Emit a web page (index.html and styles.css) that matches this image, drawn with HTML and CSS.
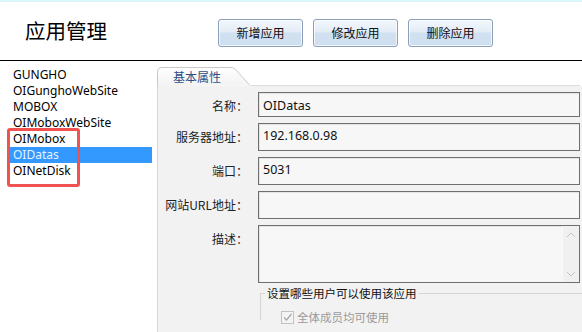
FILE: index.html
```html
<!DOCTYPE html>
<html lang="zh-CN">

<head>
    <meta charset="UTF-8">
    <meta name="viewport" content="width=device-width, initial-scale=1.0">
    <link rel="stylesheet" href="styles.css">
</head>

<body>
    <div class="topline"></div>
    <div class="header">
        <div class="title">应用管理</div>
        <div class="actions">
            <button class="btn">新增应用</button>
            <button class="btn">修改应用</button>
            <button class="btn">删除应用</button>
        </div>
    </div>
    <div class="rule"></div>

    <div class="main">
        <div class="apps">
            <div class="app">GUNGHO</div>
            <div class="app">OIGunghoWebSite</div>
            <div class="app">MOBOX</div>
            <div class="app">OIMoboxWebSite</div>
            <div class="app">OIMobox</div>
            <div class="app selected">OIDatas</div>
            <div class="app">OINetDisk</div>
            <div class="mark"></div>
        </div>

        <div class="props">
            <div class="tabs">
                <div class="tab">
                    <svg class="tab-bg" width="94" height="19" viewBox="0 0 94 19">
                        <defs>
                            <linearGradient id="tabfill" x1="0" y1="0" x2="0" y2="1">
                                <stop offset="0" stop-color="#ffffff"></stop>
                                <stop offset="1" stop-color="#f2f2f2"></stop>
                            </linearGradient>
                        </defs>
                        <path d="M0.5 19 V5 Q0.5 0.5 5 0.5 H74 Q77 0.5 79 3 L93 18.5" fill="url(#tabfill)" stroke="#c9c9c9"></path>
                    </svg>
                    <span class="tab-text">基本属性</span>
                </div>
                <div class="tab-rest"></div>
            </div>

            <div class="form">
                <div class="row">
                    <label>名称：</label>
                    <div class="field h25">OIDatas</div>
                </div>
                <div class="row">
                    <label>服务器地址：</label>
                    <div class="field h28">192.168.0.98</div>
                </div>
                <div class="row">
                    <label>端口：</label>
                    <div class="field h28">5031</div>
                </div>
                <div class="row">
                    <label>网站URL地址：</label>
                    <div class="field h28"></div>
                </div>
                <div class="row">
                    <label>描述：</label>
                    <div class="field area">
                        <div class="scroll">
                            <svg width="10" height="6" viewBox="0 0 10 6"><path d="M1 5 L5 1 L9 5" fill="none" stroke="#c4c4c4"></path></svg>
                            <svg width="10" height="6" viewBox="0 0 10 6"><path d="M1 1 L5 5 L9 1" fill="none" stroke="#c4c4c4"></path></svg>
                        </div>
                    </div>
                </div>
                <div class="row">
                    <span></span>
                    <fieldset class="group">
                        <legend>设置哪些用户可以使用该应用</legend>
                        <div class="check">
                            <span class="box">
                                <svg width="11" height="11" viewBox="0 0 11 11"><path d="M2 5.5 L4.5 8 L9.5 2" fill="none" stroke="#a8a8a8" stroke-width="1.3"></path></svg>
                            </span>
                            全体成员均可使用
                        </div>
                    </fieldset>
                </div>
            </div>
        </div>
    </div>
</body>

</html>
```

FILE: styles.css
```css
html {
    height: 332px;
    overflow: hidden;
}

body {
    margin: 0;
    background: #ffffff;
    font-family: "Noto Sans", "Noto Sans CJK SC", sans-serif;
    font-size: 12px;
    color: #000;
}

.topline {
    height: 2px;
    background: #daf6fb;
}

.header {
    display: flex;
    align-items: center;
    height: 58px;
    padding-left: 25px;
}

.title {
    font-family: "Noto Sans CJK SC", sans-serif;
    font-size: 20.5px;
    width: 193px;
    margin-top: -2px;
}

.actions {
    display: flex;
    gap: 10px;
    margin-top: 3px;
}

.btn {
    width: 85px;
    height: 28px;
    padding: 0;
    border: 1px solid #8c9fb8;
    border-radius: 3px;
    background: linear-gradient(#f3f7fc 0%, #e3ecf6 45%, #d2e1f1 50%, #cfdff0 100%);
    box-shadow: inset 0 0 0 1px rgba(255, 255, 255, 0.7);
    font-family: "Noto Sans CJK SC", sans-serif;
    font-size: 12px;
    color: #111;
}

.rule {
    height: 1px;
    background: #000;
}

.main {
    display: flex;
}

.apps {
    position: relative;
    width: 157px;
    padding-top: 6px;
}

.app {
    height: 16px;
    line-height: 16px;
    margin-left: 8px;
    margin-right: 5px;
    padding-left: 5px;
    font-size: 12px;
}

.app.selected {
    background: #3399ff;
    color: #e6f2ff;
}

.mark {
    position: absolute;
    left: 7px;
    top: 67px;
    width: 67px;
    height: 53px;
    border: 3px solid #f05252;
    border-radius: 3px;
}

.props {
    flex: 1;
    margin-top: 6px;
}

.tabs {
    display: flex;
    height: 19px;
}

.tab {
    position: relative;
    width: 94px;
}

.tab-bg {
    position: absolute;
    left: 0;
    top: 0;
}

.tab-text {
    position: relative;
    display: block;
    padding: 1px 0 0 16px;
    font-family: "Noto Sans CJK SC", sans-serif;
    font-size: 12px;
    color: #2c4f86;
}

.tab-rest {
    flex: 1;
    border-bottom: 1px solid #dcdcdc;
    margin-right: 2px;
}

.form {
    display: flex;
    flex-direction: column;
    gap: 6px;
    height: 241px;
    padding-top: 6px;
    background: #f2f2f2;
    border-left: 1px solid #d6d6d6;
    font-family: "Noto Sans CJK SC", sans-serif;
}

.row {
    display: grid;
    grid-template-columns: 100px 1fr;
}

.row label {
    text-align: right;
    padding-right: 10px;
    padding-top: 5px;
    font-size: 12px;
    color: #222;
}

.field {
    margin-right: 2px;
    border: 1px solid #6f6f6f;
    box-shadow: inset 1px 1px 0 #e4e4e4;
    background: #f7f7f7;
    padding: 3px 0 0 4px;
    font-family: "Noto Sans", sans-serif;
    font-size: 12.5px;
    color: #111;
    box-sizing: border-box;
}

.h25 {
    height: 25px;
    padding-top: 4px;
}

.h28 {
    height: 28px;
}

.area {
    position: relative;
    height: 58px;
}

.scroll {
    position: absolute;
    right: 0;
    top: 0;
    bottom: 0;
    width: 17px;
    display: flex;
    flex-direction: column;
    justify-content: space-between;
    align-items: center;
    padding: 6px 0 5px;
    box-sizing: border-box;
    background: #f0f0f0;
    border-left: 1px solid #f8f8f8;
}

.group {
    margin: -4px 0 0 2px;
    padding: 4px 0 0 4px;
    height: 30px;
    border: 1px solid #d5d5d5;
    border-right: 0;
    border-bottom: 0;
}

.group legend {
    padding: 0 2px;
    font-size: 11.5px;
    color: #111;
}

.check {
    display: flex;
    align-items: center;
    gap: 3px;
    padding-left: 16px;
    margin-top: 4px;
    font-size: 11.5px;
    color: #9a9a9a;
}

.box {
    display: inline-flex;
    align-items: center;
    justify-content: center;
    width: 11px;
    height: 11px;
    border: 1px solid #c2c2c2;
    background: #f4f4f4;
}
```
